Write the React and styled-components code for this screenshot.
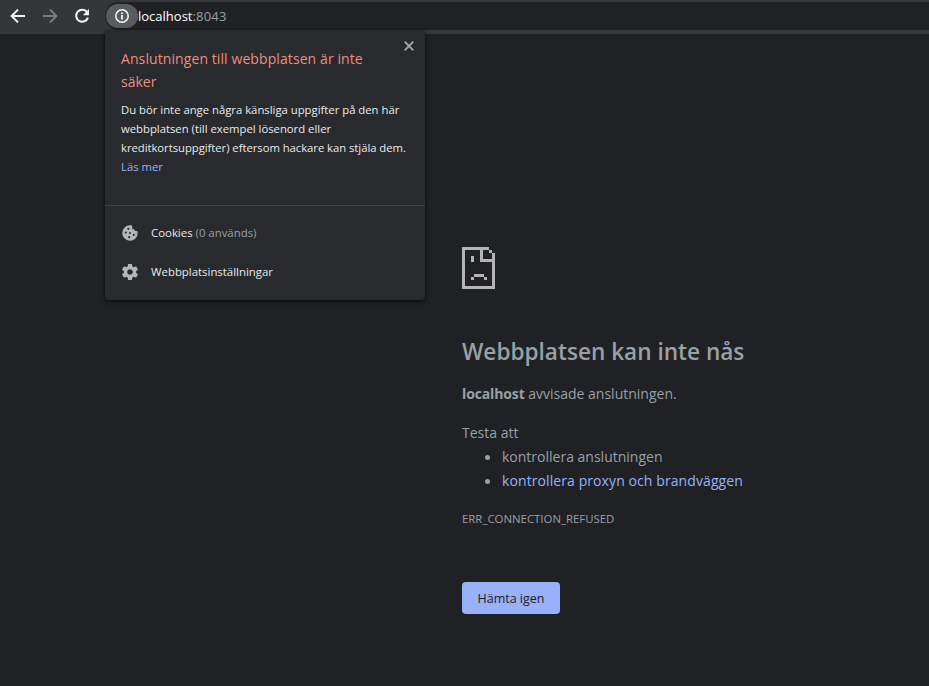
import React from "react";
import styled, { createGlobalStyle } from "styled-components";

const GlobalStyle = createGlobalStyle`
  * { box-sizing: border-box; }
  body {
    margin: 0;
    background: #202124;
    font-family: "Open Sans", "Noto Sans", sans-serif;
    overflow: hidden;
  }
  h1, h2, p, ul { margin: 0; padding: 0; }
`;

const Window = styled.div`
  position: relative;
  display: flex;
  flex-direction: column;
  width: 929px;
  height: 686px;
  background: #202124;
`;

const Toolbar = styled.header`
  display: flex;
  align-items: flex-start;
  height: 34px;
  padding: 2px 0 0 8px;
  background: #35363a;
`;

const NavButton = styled.span`
  display: flex;
  align-items: center;
  justify-content: center;
  width: 20px;
  height: 28px;
  margin-right: 12px;
  color: ${(p) => (p.$dim ? "#7c7d80" : "#f1f3f4")};
`;

const Omnibox = styled.div`
  display: flex;
  align-items: center;
  flex: 1;
  height: 28px;
  margin-left: 1px;
  padding-left: 1px;
  background: #202124;
  border-radius: 14px 0 0 14px;
`;

const InfoChip = styled.span`
  display: flex;
  align-items: center;
  justify-content: center;
  width: 32px;
  height: 24px;
  border-radius: 12px;
  background: #5a5b5e;
`;

const Url = styled.span`
  font-size: 13px;
  line-height: 28px;
  white-space: nowrap;
  letter-spacing: ${(p) => p.$track || 0}px;
  color: ${(p) => (p.$muted ? "#9aa0a6" : "#ffffff")};
`;

const Bubble = styled.aside`
  position: absolute;
  left: 105px;
  top: 30px;
  width: 320px;
  height: 270px;
  background: #292a2d;
  border-radius: 4px;
  box-shadow: 0 1px 3px rgba(0, 0, 0, 0.6), 0 2px 6px rgba(0, 0, 0, 0.3);
`;

const CloseButton = styled.span`
  position: absolute;
  top: 11px;
  right: 11px;
  display: flex;
`;

const Warning = styled.section`
  height: 176px;
  padding: 17px 16px 0;
  border-bottom: 1px solid #3f4043;
  white-space: nowrap;
`;

const WarningTitle = styled.h2`
  font-size: 14px;
  font-weight: 400;
  line-height: 23px;
  color: #ea8f82;
`;

const WarningText = styled.p`
  margin-top: 7px;
  font-size: 11.3px;
  line-height: 19px;
  color: #e8eaed;
`;

const Line = styled.span`
  display: block;
  letter-spacing: ${(p) => p.$track || 0}px;
  color: ${(p) => (p.$link ? "#98b1f9" : "inherit")};
`;

const Settings = styled.section`
  display: flex;
  flex-direction: column;
  padding: 7px 16px 0;
`;

const SettingRow = styled.div`
  display: flex;
  align-items: center;
  height: 39px;
  gap: 12px;
  font-size: 11.4px;
  color: #e8eaed;
  white-space: nowrap;
`;

const SettingLabel = styled.span`
  letter-spacing: ${(p) => p.$track || 0}px;
`;

const Muted = styled.span`
  color: #9aa0a6;
`;

const ErrorPage = styled.main`
  display: flex;
  flex-direction: column;
  align-items: flex-start;
  padding: 213px 0 0 462px;
  color: #9aa0a6;
  font-size: 14px;
  line-height: 24px;
  white-space: nowrap;
`;

const ErrorTitle = styled.h1`
  margin-top: 48px;
  font-size: 22.6px;
  font-weight: 600;
  line-height: 29px;
`;

const Summary = styled.p`
  margin-top: 16px;
`;

const Tracked = styled.span`
  letter-spacing: ${(p) => p.$track || 0}px;
  font-weight: ${(p) => (p.$bold ? 700 : 400)};
`;

const Hint = styled.p`
  margin-top: 15px;
`;

const Suggestions = styled.ul`
  list-style: none;
`;

const Suggestion = styled.li`
  display: flex;
  align-items: center;
  gap: 12px;
  height: 24px;
  padding-left: 23px;
  color: ${(p) => (p.$link ? "#98b1f9" : "inherit")};
  &::before {
    content: "";
    width: 5px;
    height: 5px;
    margin-top: 1px;
    border-radius: 50%;
    background: #9aa0a6;
  }
`;

const ErrorCode = styled.p`
  margin-top: 14px;
  font-size: 11.4px;
`;

const ReloadButton = styled.button`
  width: 98px;
  height: 32px;
  margin-top: 51px;
  padding: 2px 0 0;
  border: 0;
  border-radius: 4px;
  background: #98b1f9;
  color: #202124;
  font-family: inherit;
  font-size: 12.5px;
  line-height: 30px;
`;

const Arrow = ({ flip }) => (
  <svg width="20" height="20" viewBox="0 0 20 20" fill="none" stroke="currentColor" strokeWidth="2">
    <path d={flip ? "M3 10H16M10 3.6L16.4 10L10 16.4" : "M17 10H4M10 3.6L3.6 10L10 16.4"} />
  </svg>
);

const Reload = () => (
  <svg width="20" height="20" viewBox="0 0 20 20">
    <path d="M15.1 6.2A6 6 0 1 0 15.9 11.6" fill="none" stroke="currentColor" strokeWidth="2.1" />
    <path d="M17 3V9.2H10.8Z" fill="currentColor" />
  </svg>
);

const Info = () => (
  <svg width="16" height="16" viewBox="0 0 16 16">
    <circle cx="8" cy="8" r="6.2" fill="none" stroke="#f1f3f4" strokeWidth="1.5" />
    <path d="M7.1 7H8.9V11.4H7.1ZM7.1 4.4H8.9V6H7.1Z" fill="#f1f3f4" />
  </svg>
);

const Close = () => (
  <svg width="10" height="10" viewBox="0 0 10 10" stroke="#a3a8ad" strokeWidth="1.9">
    <path d="M.7 .7L9.3 9.3M9.3 .7L.7 9.3" />
  </svg>
);

const Cookie = () => (
  <svg width="18" height="18" viewBox="0 0 18 18">
    <path
      d="M9 1.3A7.7 7.7 0 1 0 16.7 9.4C15.3 9.6 14.4 8.8 14.2 7.5C12.6 7.6 11.6 6.7 11.8 5.2C10.1 4.8 9.4 3 10.3 1.4Z"
      fill="#b5b6b9"
    />
    <path d="M9 1.3C12 1.2 16.8 4.5 16.7 9.4L14 9L9.5 5Z" fill="#b5b6b9" />
    <g fill="#292a2d">
      <circle cx="7.3" cy="4.8" r="1.1" />
      <circle cx="4.8" cy="8.6" r="1.1" />
      <circle cx="9" cy="9" r="1" />
      <circle cx="8.2" cy="13.2" r="1.1" />
      <circle cx="12.8" cy="10.8" r="1.1" />
      <path d="M11.2 1V4.1C11.2 5.2 12.2 5.5 13.2 5.3C13.3 6.6 14.4 7.3 17.5 7.2V1Z" />
    </g>
  </svg>
);

const Gear = () => (
  <svg width="18" height="18" viewBox="1.3 1.3 21.4 21.4">
    <path
      fill="#b5b6b9"
      d="M19.14 12.94c.04-.3.06-.61.06-.94 0-.32-.02-.64-.07-.94l2.03-1.58c.18-.14.23-.41.12-.61l-1.92-3.32c-.12-.22-.37-.29-.59-.22l-2.39.96c-.5-.38-1.03-.7-1.62-.94l-.36-2.54c-.04-.24-.24-.41-.48-.41h-3.84c-.24 0-.43.17-.47.41l-.36 2.54c-.59.24-1.13.57-1.62.94l-2.39-.96c-.22-.08-.47 0-.59.22L2.74 8.87c-.12.21-.08.47.12.61l2.03 1.58c-.05.3-.09.63-.09.94s.02.64.07.94l-2.03 1.58c-.18.14-.23.41-.12.61l1.92 3.32c.12.22.37.29.59.22l2.39-.96c.5.38 1.03.7 1.62.94l.36 2.54c.05.24.24.41.48.41h3.84c.24 0 .44-.17.47-.41l.36-2.54c.59-.24 1.13-.56 1.62-.94l2.39.96c.22.08.47 0 .59-.22l1.92-3.32c.12-.22.07-.47-.12-.61l-2.01-1.58zM12 15.3c-1.82 0-3.3-1.48-3.3-3.3s1.48-3.3 3.3-3.3 3.3 1.48 3.3 3.3-1.48 3.3-3.3 3.3z"
    />
  </svg>
);

const SadPage = () => (
  <svg width="33" height="42" viewBox="0 0 33 42" fill="#b4b4b4" shapeRendering="crispEdges">
    <path d="M0 0H27V3H21V12H33V42H0ZM3 3V39H30V15H18V3Z" fillRule="evenodd" />
    <path d="M27 3H30V6H27ZM30 6H33V12H30Z" />
    <path d="M9 9H12V15H9ZM12 27H22V30H12ZM9 30H12V33H9ZM22 30H25V33H22Z" />
  </svg>
);

export default function App() {
  return (
    <Window>
      <GlobalStyle />
      <Toolbar>
        <NavButton><Arrow /></NavButton>
        <NavButton $dim><Arrow flip /></NavButton>
        <NavButton><Reload /></NavButton>
        <Omnibox>
          <InfoChip><Info /></InfoChip>
          <Url>localhost</Url>
          <Url $muted $track={0.2}>:8043</Url>
        </Omnibox>
      </Toolbar>

      <ErrorPage>
        <SadPage />
        <ErrorTitle>Webbplatsen kan inte nås</ErrorTitle>
        <Summary>
          <Tracked $bold $track={-0.13}>localhost</Tracked> <Tracked>avvisade anslutningen.</Tracked>
        </Summary>
        <Hint><Tracked>Testa att</Tracked></Hint>
        <Suggestions>
          <Suggestion><Tracked>kontrollera anslutningen</Tracked></Suggestion>
          <Suggestion $link><Tracked $track={0.09}>kontrollera proxyn och brandväggen</Tracked></Suggestion>
        </Suggestions>
        <ErrorCode>ERR_CONNECTION_REFUSED</ErrorCode>
        <ReloadButton>Hämta igen</ReloadButton>
      </ErrorPage>

      <Bubble>
        <CloseButton><Close /></CloseButton>
        <Warning>
          <WarningTitle>
            <Line $track={0.09}>Anslutningen till webbplatsen är inte</Line>
            <Line>säker</Line>
          </WarningTitle>
          <WarningText>
            <Line>Du bör inte ange några känsliga uppgifter på den här</Line>
            <Line>webbplatsen (till exempel lösenord eller</Line>
            <Line $track={-0.04}>kreditkortsuppgifter) eftersom hackare kan stjäla dem.</Line>
            <Line $link>Läs mer</Line>
          </WarningText>
        </Warning>
        <Settings>
          <SettingRow>
            <Cookie />
            <SettingLabel>Cookies <Muted>(0 används)</Muted></SettingLabel>
          </SettingRow>
          <SettingRow>
            <Gear />
            <SettingLabel>Webbplatsinställningar</SettingLabel>
          </SettingRow>
        </Settings>
      </Bubble>
    </Window>
  );
}
